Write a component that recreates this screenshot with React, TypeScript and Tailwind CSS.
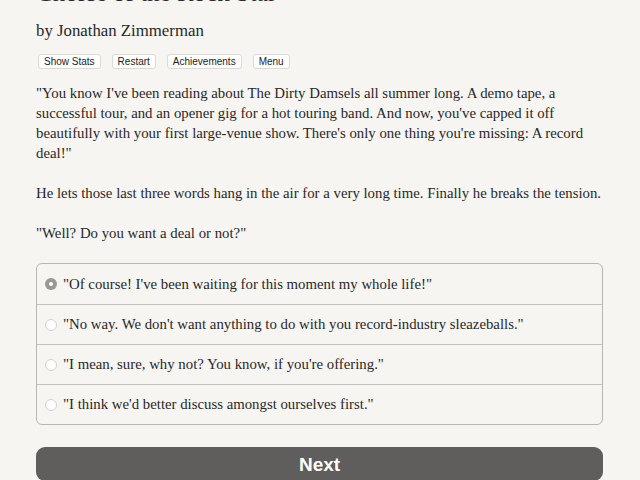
import React, { useState } from 'react';

const choices = [
    '"Of course! I\'ve been waiting for this moment my whole life!"',
    '"No way. We don\'t want anything to do with you record-industry sleazeballs."',
    '"I mean, sure, why not? You know, if you\'re offering."',
    '"I think we\'d better discuss amongst ourselves first."',
];

const toolbar = ['Show Stats', 'Restart', 'Achievements', 'Menu'];

const App: React.FC = () => {
    const [selected, setSelected] = useState(0);

    return (
        <div className="min-h-screen bg-[#f7f5f2] pl-[36px] pr-[37px] text-[#282828] font-['Liberation_Serif',serif] overflow-hidden">
            <h1 className="text-[25px] leading-[30px] -mt-[22px]">Choice of the Rock Star</h1>
            <p className="text-[16.8px] leading-[22px] mt-[12px]">by Jonathan Zimmerman</p>

            <div className="flex gap-[11px] mt-[12px] ml-[2px] font-['Liberation_Sans',sans-serif]">
                {toolbar.map((label) => (
                    <button key={label} className="h-[15px] px-[5px] text-[10px] leading-none bg-white border border-[#dcdad6] rounded-[3px] text-[#222]">
                        {label}
                    </button>
                ))}
            </div>

            <div className="text-[14.8px] leading-[20px] mt-[14px] space-y-[20px]">
                <p>
                    "You know I've been reading about The Dirty Damsels all summer long. A demo tape, a successful tour, and an opener gig for a hot touring band. And now, you've capped it off beautifully with your first large-venue show. There's only one thing you're missing: A record deal!"
                </p>
                <p>He lets those last three words hang in the air for a very long time. Finally he breaks the tension.</p>
                <p>"Well? Do you want a deal or not?"</p>
            </div>

            <div className="mt-[20px] border border-[#b9b7b4] rounded-[6px] overflow-hidden">
                {choices.map((text, i) => (
                    <label key={i} className={`flex items-center h-[40px] pl-[8px] gap-[6px] text-[14.8px] cursor-pointer ${i > 0 ? 'border-t border-[#c4c2bf]' : ''}`}>
                        <input type="radio" name="choice" className="hidden" checked={selected === i} onChange={() => setSelected(i)} />
                        <span className={`w-[12px] h-[12px] rounded-full flex items-center justify-center shrink-0 ${selected === i ? 'bg-[#9a9896]' : 'bg-white border border-[#d4d2cf]'}`}>
                            {selected === i && <span className="w-[4px] h-[4px] rounded-full bg-white" />}
                        </span>
                        <span>{text}</span>
                    </label>
                ))}
            </div>

            <button className="mt-[22px] w-full h-[34px] rounded-[9px] bg-[#5f5e5c] text-white text-[19px] leading-none font-bold font-['Liberation_Sans',sans-serif]">
                Next
            </button>
        </div>
    );
};

export default App;
